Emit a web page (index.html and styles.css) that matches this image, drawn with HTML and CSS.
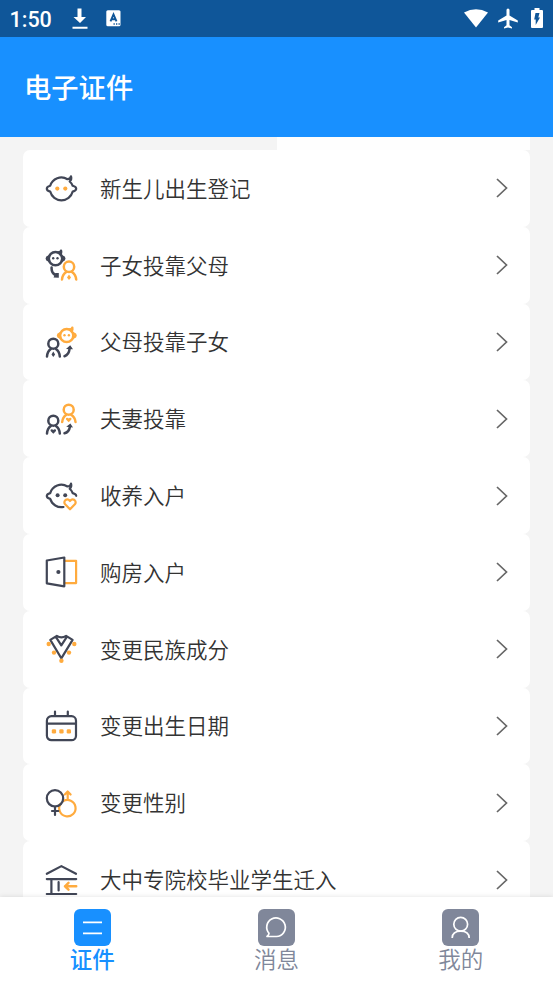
FILE: index.html
```html
<!DOCTYPE html>
<html lang="zh-CN">
<head>
<meta charset="utf-8">
<title>电子证件</title>
<link rel="stylesheet" href="styles.css">
</head>
<body>
<div class="status">
  <span class="clock">1:50</span>
  <svg class="download" width="16" height="22" viewBox="0 0 16 22"><path d="M5.5.5h4v8.500h4.500L8 15 1.500 9h4zM.5 18.800h15v1.900H.5z" fill="#fff"/></svg>
  <svg class="lang" width="15" height="17" viewBox="0 0 15 17"><rect x=".3" y=".3" width="14.200" height="16" rx="1.500" fill="#fff"/><path d="M4.500 11.300 7.500 4.300 10.500 11.300M5.500 9.300h4" fill="none" stroke="#0f5699" stroke-width="1.900"/><path d="M7.500 14h1.300M10 14h1.300M12.500 14h1.300" stroke="#0f5699" stroke-width="1.300"/></svg>
  <svg class="wifi" width="24" height="19" viewBox="0 0 24 19"><path d="M0 3.500Q12-3 24 3.500L12 18.500z" fill="#fff"/></svg>
  <svg class="plane" width="20" height="21" viewBox="0 0 20 21"><path d="M8.500 7.500V2a1.500 1.500 0 0 1 3 0v5.500l8.300 5v2.100l-8.300-2.500v5.200l2.500 1.900v1.400L10 19.500l-4 1.100v-1.400l2.500-1.900v-5.200L.2 14.600v-2.100z" fill="#fff"/></svg>
  <svg class="battery" width="12" height="20" viewBox="0 0 12 20"><path d="M3.500 0h5v2H11q1 0 1 1v16q0 1-1 1H1q-1 0-1-1V3q0-1 1-1h2.500z" fill="#fff"/><path d="M4.500 5h4L7.300 9.500H9L4.700 17v-5.500H3.200z" fill="#0f5699"/></svg>
</div>
<header class="header"><h1>电子证件</h1></header>

<main class="content">
  <div class="tabs"><span class="tab"></span><span class="tab active"></span></div>
  <ul class="list">
    <li class="row">
      <svg class="icon" viewBox="0 0 32 32"><g class="dark"><path d="M4.200 13.800A11.600 11.600 0 0 1 21.500 7.200Q24.500 7 25 4.300q1 3-1.300 5.200 2.200 2 3 4.300 3.500 1 3.500 2.900t-3.500 2.900A11.600 11.600 0 0 1 4.200 19.600Q.8 18.700.8 16.700t3.400-2.900z"/></g><circle class="gold-fill" cx="11.300" cy="16.600" r="2.100"/><circle class="gold-fill" cx="19.300" cy="16.600" r="2.100"/></svg>
      <span class="label">新生儿出生登记</span><svg class="chevron" viewBox="0 0 12 20"><path d="m1 1 9.500 9L1 19"/></svg>
    </li>
    <li class="row">
      <svg class="icon small" viewBox="0 0 32 32"><g class="dark"><circle cx="9.500" cy="9.600" r="6.700"/><path d="M3 7.500Q.8 8.300.8 9.600T3 11.700M16 7.500q2.300.8 2.300 2.100T16 11.700M12.500 3.500Q14.700 3.400 15 1.800q.5 2-.8 3.500M5.600 18.500q-.4 5.500 4 7.500"/></g><circle class="dark-fill" cx="7.200" cy="9.300" r="1.200"/><circle class="dark-fill" cx="11.500" cy="9.300" r="1.200"/><path class="dark-fill" d="m7.500 28.500 2-4.500h3.300v4.800z"/><g class="gold"><circle cx="23" cy="17.800" r="5.200"/><path d="M16 30.500q.4-5 4.300-7.500M30.200 30.500q-.4-5-4.300-7.500"/></g><path class="gold-fill" d="m23 25.500 2 3-2 2.500-2-2.500z"/></svg>
      <span class="label">子女投靠父母</span><svg class="chevron" viewBox="0 0 12 20"><path d="m1 1 9.500 9L1 19"/></svg>
    </li>
    <li class="row">
      <svg class="icon small" viewBox="0 0 32 32"><g class="gold"><circle cx="20.700" cy="9.500" r="6.600"/><path d="M14.200 7.400Q12 8.200 12 9.500t2.200 2.100M27.300 7.400q2.300.8 2.300 2.100t-2.300 2.100M23.800 3.500q2.200-.1 2.500-1.700.5 2-.8 3.500"/></g><circle class="gold-fill" cx="18.500" cy="9.300" r="1.200"/><circle class="gold-fill" cx="22.900" cy="9.300" r="1.200"/><g class="dark"><circle cx="7.300" cy="17.700" r="5"/><path d="M1 30.500q.3-5 3.800-7.500M13.800 30.500q-.3-5-3.900-7.500M18.500 30.200q4.500-1.500 5-7"/></g><path class="dark-fill" d="m7.300 25.500 1.800 3-1.800 2.500-1.800-2.500zM20 23l4.200-3.700 2.800 4z"/></svg>
      <span class="label">父母投靠子女</span><svg class="chevron" viewBox="0 0 12 20"><path d="m1 1 9.500 9L1 19"/></svg>
    </li>
    <li class="row">
      <svg class="icon small" viewBox="0 0 32 32"><g class="gold"><circle cx="22.700" cy="6.700" r="5"/><path d="M16.200 19q.4-4.700 4.100-7.200M29.500 19q-.4-4.700-4.400-7.200"/></g><path class="gold-fill" d="M22.700 19.300 20 16.500q-.5-1.700 1-1.800 1-.1 1.700.8.700-.9 1.700-.8 1.500.1 1 1.800z"/><g class="dark"><circle cx="7.300" cy="17.700" r="5"/><path d="M1 30.500q.3-5 3.800-7.500M13.800 30.500q-.3-5-3.900-7.500M18.500 30.200q4.500-1 5.300-6"/></g><path class="dark-fill" d="M7.300 30.700 4.600 28q-.5-1.700 1-1.800 1-.1 1.700.8.700-.9 1.700-.8 1.500.1 1 1.800zM20.200 23.700l4.200-3.200 2.600 4z"/></svg>
      <span class="label">夫妻投靠</span><svg class="chevron" viewBox="0 0 12 20"><path d="m1 1 9.500 9L1 19"/></svg>
    </li>
    <li class="row">
      <svg class="icon" viewBox="0 0 32 32"><g class="dark"><path d="M17.500 27A11.600 11.600 0 0 1 4.200 18.900Q.8 18 .8 16t3.400-2.900A11.600 11.600 0 0 1 21.500 6.500Q24.500 6.300 25 3.600q1 3-1.300 5.200 2.200 2 3 4.300 3.400.9 3.500 2.700"/></g><circle class="dark-fill" cx="11.600" cy="15.200" r="2"/><circle class="dark-fill" cx="19.200" cy="15.200" r="2"/><path class="gold" d="m24 29.300-5.100-5.200q-1.300-2.500.6-4.100 2.500-1.600 4.500 1 2-2.600 4.500-1 1.900 1.600.6 4.100z"/></svg>
      <span class="label">收养入户</span><svg class="chevron" viewBox="0 0 12 20"><path d="m1 1 9.500 9L1 19"/></svg>
    </li>
    <li class="row">
      <svg class="icon" viewBox="0 0 32 32"><path class="gold" d="M18.500 4.800h11.600v22.300H18.500"/><path class="dark" d="m.8 4.500 17.500-3v28.800L.8 27.300z"/><circle class="dark-fill" cx="12.400" cy="16" r="2.100"/></svg>
      <span class="label">购房入户</span><svg class="chevron" viewBox="0 0 12 20"><path d="m1 1 9.500 9L1 19"/></svg>
    </li>
    <li class="row">
      <svg class="icon" viewBox="0 0 32 32"><g class="dark"><path d="m4.300 6.900 6.500-4q4.600 2.800 9.300 0l6.500 4-11.300 18.400zM9.700 3.600l5.600 8.700 5.700-8.700"/></g><g class="gold-fill"><circle cx="2.700" cy="11" r="2.200"/><circle cx="28.300" cy="11" r="2.200"/><circle cx="8" cy="19.600" r="2.200"/><circle cx="23" cy="19.600" r="2.200"/><circle cx="15.400" cy="27.700" r="2.200"/></g></svg>
      <span class="label">变更民族成分</span><svg class="chevron" viewBox="0 0 12 20"><path d="m1 1 9.500 9L1 19"/></svg>
    </li>
    <li class="row">
      <svg class="icon" viewBox="0 0 32 32"><g class="dark"><rect x=".9" y="6.200" width="29.100" height="24" rx="4.500"/><path d="M1 13.700h29M9 1.500V6M21.800 1.500V6"/></g><g class="gold-fill"><rect x="5.800" y="19.200" width="4.300" height="4.300" rx="1.300"/><rect x="13.300" y="19.200" width="4.300" height="4.300" rx="1.300"/><rect x="20.700" y="19.200" width="4.300" height="4.300" rx="1.300"/></g></svg>
      <span class="label">变更出生日期</span><svg class="chevron" viewBox="0 0 12 20"><path d="m1 1 9.500 9L1 19"/></svg>
    </li>
    <li class="row">
      <svg class="icon" viewBox="0 0 32 32"><g class="gold"><path d="M17.200 14.100A8.200 8.200 0 1 1 14.300 17M21.700 12.500V5M18.800 7.500l2.900-3 2.900 3"/></g><g class="dark"><circle cx="9" cy="11.300" r="8.200"/><path d="M9 19.500v8.400M6 24h6.300"/></g></svg>
      <span class="label">变更性别</span><svg class="chevron" viewBox="0 0 12 20"><path d="m1 1 9.500 9L1 19"/></svg>
    </li>
    <li class="row">
      <svg class="icon" viewBox="0 0 32 32"><g class="dark"><path d="m.8 9.800 14.600-7.700L30 9.800M.8 15.100h29.400M.8 30h29.400M5.400 15.500V30M12.600 18.200v8.300"/></g><path class="gold arrow" d="M30.200 22.300H19M22.500 18.900 19 22.300l3.500 3.400"/></svg>
      <span class="label">大中专院校毕业学生迁入</span><svg class="chevron" viewBox="0 0 12 20"><path d="m1 1 9.500 9L1 19"/></svg>
    </li>
  </ul>
</main>

<nav class="nav">
  <a class="item current"><svg viewBox="0 0 37 37"><rect width="37" height="37" rx="6"/><path d="M9 13.300h19M9 24.300h19"/></svg><span>证件</span></a>
  <a class="item"><svg viewBox="0 0 37 37"><rect width="37" height="37" rx="6"/><path d="M9 27.500h9.500A9.300 9.300 0 1 0 11 24.300Q11 26 9 27.500z"/></svg><span>消息</span></a>
  <a class="item"><svg viewBox="0 0 37 37"><rect width="37" height="37" rx="6"/><circle cx="18.700" cy="15.300" r="6.900"/><path d="M10.200 29q.3-6.800 8.500-6.800t8.500 6.800"/></svg><span>我的</span></a>
</nav>
</body>
</html>
```
FILE: styles.css
```css
* { box-sizing: border-box; }
body {
  margin: 0;
  height: 983px;
  display: flex;
  flex-direction: column;
  overflow: hidden;
  background: #f4f4f4;
  font-family: "Noto Sans CJK SC", sans-serif;
}
svg { display: block; flex: none; }

.status {
  flex: none;
  height: 37px;
  display: flex;
  align-items: center;
  padding: 0 4px 0 9.500px;
  background: #0f5699;
}
.clock {
  width: 62px;
  font: 500 21.500px/37px Roboto, sans-serif;
  color: #fff;
  padding-top: 1px;
}
.lang { margin-left: 18.500px; }
.wifi { margin-left: auto; margin-right: 10px; }
.plane { margin-right: 13px; }
.battery { margin-right: 6px; margin-bottom: 1px; }

.header {
  flex: none;
  height: 100px;
  display: flex;
  align-items: center;
  padding-left: 24px;
  padding-bottom: 2px;
  background: #1890ff;
}
.header h1 {
  margin: 0;
  font-size: 27.300px;
  font-weight: 500;
  line-height: 40px;
  color: #fff;
}

.content {
  flex: none;
  height: 760px;
  padding: 0 23px;
  overflow: hidden;
}
.tabs { display: flex; height: 13px; }
.tab { flex: 1; }
.tab.active { background: #fefefe; }
.list { margin: 0; padding: 0; list-style: none; }
.row {
  height: 76.800px;
  display: flex;
  align-items: center;
  padding: 0 22px 0 23px;
  border-radius: 7px;
  background: #fff;
}
.icon { width: 32px; height: 32px; overflow: visible; }
.label {
  flex: 1;
  margin-left: 22px;
  padding-bottom: 1px;
  font-size: 21.500px;
  font-weight: 350;
  line-height: 32px;
  white-space: nowrap;
  color: #333;
}
.chevron { width: 12px; height: 20px; }
.chevron path { fill: none; stroke: #666; stroke-width: 1.700; }
.dark, .gold { fill: none; stroke-width: 2.200; stroke-linejoin: round; stroke-linecap: round; }
.dark { stroke: #414656; }
.gold { stroke: #ffab3e; }
.small .dark, .small .gold { stroke-width: 2.500; }
.arrow { stroke-width: 2.500; }
.dark-fill { fill: #414656; }
.gold-fill { fill: #ffab3e; }

.nav {
  flex: none;
  height: 86px;
  display: flex;
  padding-top: 12px;
  position: relative;
  background: #fff;
  box-shadow: 0 0 5px rgba(0, 0, 0, .12);
}
.item {
  flex: 1;
  display: flex;
  flex-direction: column;
  align-items: center;
  color: #80879a;
  font-weight: 350;
}
.item svg { width: 37px; height: 37px; }
.item rect { fill: #80879a; }
.item path, .item circle { fill: none; stroke: #fff; stroke-width: 1.700; stroke-linejoin: round; }
.item span { font-size: 22.500px; line-height: 24px; }
.current { color: #1890ff; font-weight: 500; }
.current rect { fill: #1890ff; }
```
